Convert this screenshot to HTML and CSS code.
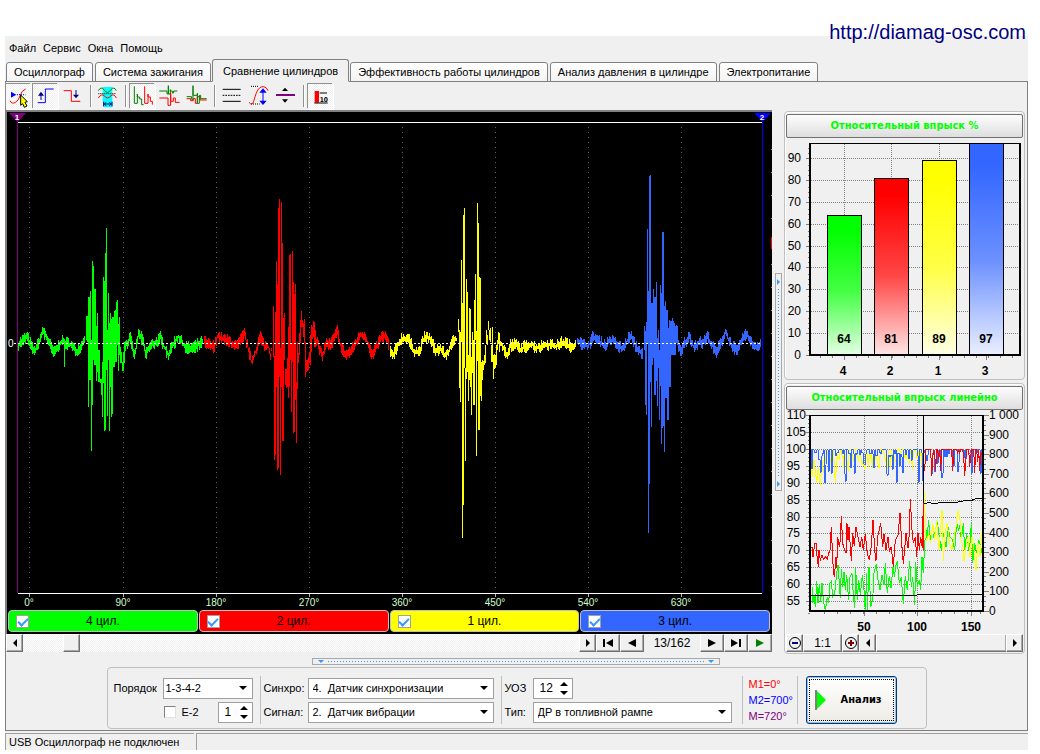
FILE: index.html
```html
<!DOCTYPE html>
<html lang="ru">
<head>
<meta charset="utf-8">
<title>Осциллограф</title>
<link rel="stylesheet" href="styles.css">
</head>
<body>
<header class="site"><a class="site-link" href="http://diamag-osc.com">http://diamag-osc.com</a></header>
<div class="app">
  <nav class="menu">
    <button type="button">Файл</button><button type="button">Сервис</button><button type="button">Окна</button><button type="button">Помощь</button>
  </nav>
  <div class="tabs" role="tablist">
    <button class="tab" role="tab">Осциллограф</button>
    <button class="tab" role="tab">Система зажигания</button>
    <button class="tab active" role="tab" aria-selected="true">Сравнение цилиндров</button>
    <button class="tab" role="tab">Эффективность работы цилиндров</button>
    <button class="tab" role="tab">Анализ давления в цилиндре</button>
    <button class="tab" role="tab">Электропитание</button>
  </div>
  <main class="page">
    <div class="toolbar">
      <button class="tool on" aria-label="Маркер"><svg viewBox="18 8 75 75"><path class="s blue" d="M51 40H76" stroke-dasharray="3 3"/><path class="blue-f" d="M33 31V49L49 40Z"/><path class="s red" d="M30 58Q36 70 46 63Q56 58 60 44Q64 28 77 23"/><path d="M62 41L82 61L75 63L81 74L73 78L68 67L62 72Z" fill="#ff0" stroke="#000" stroke-width="3"/></svg></button>
      <button class="tool on" aria-label="Фронт"><svg viewBox="100 8 75 75"><path class="s blue" d="M114 64H137V23H162"/><path class="s navy" d="M124 38V56"/><path class="navy-f" d="M115 43H133L124 31Z"/></svg></button>
      <button class="tool" aria-label="Спад"><svg viewBox="179 8 75 75"><path class="s red" d="M190 28H213V60H240"/><path class="s navy" d="M227 26V44"/><path class="navy-f" d="M218 40H236L227 51Z"/></svg></button>
      <i class="sep"></i>
      <button class="tool" aria-label="Период"><svg viewBox="284 8 75 75"><path d="M307 17H336V78H309V60H307Z" fill="#0ff"/><path class="s green" d="M294 28Q302 14 311 25Q321 42 332 25Q341 14 348 28"/><path class="s black" d="M294 37H348" stroke-dasharray="3 3"/><path class="s red" d="M294 50Q303 36 312 43Q321 57 332 43Q341 36 348 50"/><path class="s navy" d="M310 61V75M335 61V75M312 68H333M318 63L312 68L318 73M327 63L333 68L327 73"/></svg></button>
      <i class="sep"></i>
      <button class="tool on" aria-label="Последовательно"><svg viewBox="389 144 75 75"><path class="s green" d="M402 151V202M402 202H411V174V183H418V189H424V206H430"/><path class="s red" d="M433 151V202H443V174V183H450V196H456V206"/></svg></button>
      <button class="tool" aria-label="Друг под другом"><svg viewBox="470 144 75 75"><path class="s green" d="M477 165H500V174H504V149V174H510V161V165H516V171H520V165H531"/><path class="s red" d="M477 186H503V208H511V172V196H519V186H525V199H538"/></svg></button>
      <button class="tool" aria-label="Наложение"><svg viewBox="550 144 75 75"><path class="s red" d="M558 188H570V194H578V188H584V202H590V182H598V192H618"/><path class="s green" d="M558 182H573V190H577V149V178H590V172V202H596V178H600V188H618"/></svg></button>
      <i class="sep"></i>
      <button class="tool" aria-label="Уровни"><svg viewBox="655 144 75 75"><path class="s black" d="M666 160H720M666 196H720"/><path class="s black" d="M666 178H720" stroke-dasharray="5 3"/></svg></button>
      <button class="tool" aria-label="Масштаб"><svg viewBox="737 144 75 75"><path class="s black" d="M752 151H776M752 204H778" stroke-dasharray="3 3"/><path class="s red" d="M746 199Q756 211 760 196C766 176 772 150 790 152Q800 154 803 164"/><path class="s blue" d="M788 162V202"/><path class="blue-f" d="M777 170H799L788 157ZM777 194H799L788 207Z"/></svg></button>
      <button class="tool" aria-label="Центр"><svg viewBox="816 144 75 75"><path d="M825 174H882V180H825Z" fill="#800080"/><path d="M843 165H861L852 155ZM843 190H861L852 200Z"/></svg></button>
      <i class="sep"></i>
      <button class="tool on" aria-label="Гистограмма"><svg viewBox="922 144 75 75"><path d="M942 165H955V200H942Z" fill="red"/><path class="s black" d="M941 201H981M957 171H979"/><text x="957" y="197" class="ten">10</text></svg></button>
    </div>

    <div class="work">
      <section class="scope">
        <div class="screen">
          <svg class="wave" id="wave" viewBox="7 112 765 498"></svg>
          <div class="cyls">
            <label class="cyl c4"><input type="checkbox" checked><span>4 цил.</span></label>
            <label class="cyl c2"><input type="checkbox" checked><span>2 цил.</span></label>
            <label class="cyl c1"><input type="checkbox" checked><span>1 цил.</span></label>
            <label class="cyl c3"><input type="checkbox" checked><span>3 цил.</span></label>
          </div>
        </div>
        <div class="player">
          <button class="raised" aria-label="Влево"><svg viewBox="0 0 12 12"><path d="M8 2V10L4 6Z"/></svg></button>
          <input class="scroll" type="range" min="1" max="162" value="13" aria-label="Кадр">
          <button class="raised" aria-label="Вправо"><svg viewBox="0 0 12 12"><path d="M4 2V10L8 6Z"/></svg></button>
          <button class="raised wide" aria-label="В начало"><svg viewBox="0 0 12 12"><path d="M1 2H3V10H1ZM11 2V10L4 6Z"/></svg></button>
          <button class="raised wide" aria-label="Назад"><svg viewBox="0 0 12 12"><path d="M10 2V10L2 6Z"/></svg></button>
          <output class="frame">13/162</output>
          <button class="raised wide" aria-label="Вперёд"><svg viewBox="0 0 12 12"><path d="M2 2V10L10 6Z"/></svg></button>
          <button class="raised wide" aria-label="В конец"><svg viewBox="0 0 12 12"><path d="M9 2H11V10H9ZM1 2V10L8 6Z"/></svg></button>
          <button class="raised wide" aria-label="Пуск"><svg viewBox="0 0 12 12"><path d="M2 2V10L10 6Z" fill="green"/></svg></button>
        </div>
      </section>

      <div class="split-v"><i class="tri-r"></i><i class="dots-v"></i><i class="tri-r"></i></div>

      <aside class="side">
        <section class="group">
          <button class="title">Относительный впрыск %</button>
          <svg class="chart" id="bars" viewBox="786 138 237 240"></svg>
        </section>
        <section class="group">
          <button class="title">Относительный впрыск линейно</button>
          <svg class="chart" id="lines" viewBox="786 410 237 224"></svg>
          <div class="zoombar">
            <button class="raised" aria-label="Уменьшить"><svg viewBox="0 0 12 12"><circle cx="6" cy="6" r="5.5" fill="none" stroke="#000"/><path d="M3 5H9V7H3Z" fill="navy"/></svg></button>
            <button class="raised ratio">1:1</button>
            <button class="raised" aria-label="Увеличить"><svg viewBox="0 0 12 12"><circle cx="6" cy="6" r="5.5" fill="none" stroke="#000"/><path d="M3 5H5V3H7V5H9V7H7V9H5V7H3Z" fill="maroon"/></svg></button>
            <button class="raised" aria-label="Влево"><svg viewBox="0 0 12 12"><path d="M8 2V10L4 6Z"/></svg></button>
            <input class="scroll full" type="range" aria-label="Прокрутка">
            <button class="raised" aria-label="Вправо"><svg viewBox="0 0 12 12"><path d="M4 2V10L8 6Z"/></svg></button>
          </div>
        </section>
      </aside>
    </div>

    <div class="split-h"><i class="tri-d"></i><i class="dots-h"></i><i class="tri-d"></i></div>

    <form class="params">
      <div class="fields order">
        <label for="order">Порядок</label>
        <span class="select"><select id="order"><option>1-3-4-2</option></select></span>
        <span></span>
        <span class="pair">
          <label class="e2"><input class="sunken" type="checkbox">E-2</label>
          <span class="spin"><input type="text" value="1" aria-label="Номер"><span class="arrows"><button type="button" class="up" aria-label="Больше"></button><button type="button" class="down" aria-label="Меньше"></button></span></span>
        </span>
      </div>
      <i class="bar"></i>
      <div class="fields sensors">
        <label for="sync">Синхро:</label>
        <span class="select"><select id="sync"><option>4.&nbsp; Датчик синхронизации</option></select></span>
        <label for="signal">Сигнал:</label>
        <span class="select"><select id="signal"><option>2.&nbsp; Датчик вибрации</option></select></span>
      </div>
      <i class="bar"></i>
      <div class="fields kind">
        <label for="uoz">УОЗ</label>
        <span class="spin"><input id="uoz" type="text" value="12"><span class="arrows"><button type="button" class="up" aria-label="Больше"></button><button type="button" class="down" aria-label="Меньше"></button></span></span>
        <label for="type">Тип:</label>
        <span class="select"><select id="type"><option>ДР в топливной рампе</option></select></span>
      </div>
      <i class="bar last"></i>
      <div class="marks"><span class="m1">M1=0°</span><span class="m2">M2=700°</span><span class="m">M=720°</span></div>
      <i class="bar"></i>
      <button type="button" class="analyze"><svg viewBox="0 0 12 20"><path d="M1 0V20L11 10Z" fill="#0f0"/><path d="M1 0V20" stroke="#808080" stroke-width="2"/></svg><span>Анализ</span></button>
    </form>
  </main>
  <footer class="status"><span>USB Осциллограф не подключен</span><span></span></footer>
</div>
<script src="charts.js"></script>
</body>
</html>
```
FILE: styles.css
```css
* { box-sizing: border-box; }
body { margin: 0; background: #fff; color: #000; font: 11px/14px "Liberation Sans", Arial, sans-serif; }
button, input, select, output { font: inherit; color: inherit; margin: 0; }
button { padding: 0; border: 0; background: none; }
svg { display: block; }
i { display: block; }

.site { height: 36px; padding: 20px 14px 0 0; text-align: right; position: relative; z-index: 1; }
.site-link { font-size: 20px; line-height: 24px; color: #000080; text-decoration: none; }

.app { margin: 0 12px 0 5px; background: #f0f0f0; }
.menu { display: flex; gap: 7px; padding: 5px 4px 4px; }
.tabs { display: flex; align-items: flex-end; gap: 2px; padding: 0 1px; position: relative; z-index: 1; margin-bottom: -1px; }
.tab { height: 20px; padding: 0 7px; border: 1px solid #808080; border-radius: 3px 3px 0 0; background: linear-gradient(#fff, #f3f3f3); white-space: nowrap; }
.tab.active { height: 23px; padding: 0 10px; margin: 0 -1px; background: #f0f0f0; border-bottom-color: #f0f0f0; }
.page { border: 1px solid #808080; padding-bottom: 1px; }

.toolbar { display: flex; align-items: center; height: 28px; gap: 2px; }
.tool { width: 25px; height: 25px; }
.tool svg { width: 25px; height: 25px; }
.tool.on { box-shadow: -1px -1px #909090, 1px 1px #fff; background: repeating-conic-gradient(#fff 0 25%, #f0f0f0 0 50%) 0 0 / 2px 2px; }
.sep { width: 1px; height: 22px; margin: 0 2px 0 3px; background: #909090; box-shadow: 1px 0 #fff; }
.s { fill: none; stroke-width: 3; }
.red { stroke: red; } .blue { stroke: blue; } .navy { stroke: navy; } .green { stroke: green; } .black { stroke: #000; }
.blue-f { fill: blue; } .navy-f { fill: navy; }
.ten { font: bold 20px "DejaVu Sans Condensed", sans-serif; }

.work { display: grid; grid-template-columns: minmax(0, 1fr) 7px 241px; gap: 2px; align-items: start; padding-right: 2px; }
.screen { background: #000; border: 1px solid #808080; border-width: 2px 0 0 1px; margin-right: 1px; }
.wave { width: 100%; height: auto; }
.cyls { display: grid; grid-template-columns: repeat(4, 1fr); gap: 1px; padding: 0 2px 2px 1px; height: 24px; }
.cyl { display: grid; grid-template-columns: 24px 1fr 24px; align-items: center; border: 1px solid #c0c0c0; border-radius: 4px; }
.cyl span { text-align: center; font-size: 12px; }
.cyl input { appearance: none; width: 13px; height: 13px; margin-left: 7px; border: 1px solid #a0a0a0; background: #fff; display: grid; place-items: center; }
.cyl input:checked::after { content: ""; width: 4px; height: 8px; border: solid #3399ff; border-width: 0 2px 2px 0; transform: rotate(45deg); margin-bottom: 2px; }
.c4 { background: #0f0; } .c2 { background: red; } .c1 { background: #ff0; } .c3 { background: #36f; }

.player, .zoombar { display: flex; height: 18px; }
.player { margin-right: 1px; }
.raised { flex: none; width: 17px; height: 18px; display: grid; place-items: center; background: #f0f0f0; border: 1px solid; border-color: #fff #707070 #707070 #fff; box-shadow: inset -1px -1px #a8a8a8; }
.raised.wide { width: 24px; }
.raised svg { width: 12px; height: 12px; }
.frame { width: 56px; text-align: center; font-size: 12px; line-height: 18px; }
.scroll { flex: 1; min-width: 0; height: 18px; appearance: none; background: repeating-conic-gradient(#fff 0 25%, #f0f0f0 0 50%) 0 0 / 2px 2px; }
.scroll::-webkit-slider-thumb { appearance: none; width: 17px; height: 18px; background: #f0f0f0; border: 1px solid; border-color: #fff #707070 #707070 #fff; box-shadow: inset -1px -1px #a8a8a8; }
.scroll.full::-webkit-slider-thumb { width: 131px; }

.split-v { align-self: center; height: 218px; border: 1px solid #a8a8a8; display: flex; flex-direction: column; align-items: center; padding: 5px 0 3px; gap: 4px; }
.dots-v { flex: 1; width: 1px; background: repeating-linear-gradient(#39f 0 1px, transparent 1px 3px); }
.tri-r { border: solid transparent; border-width: 3px 0 3px 3px; border-left-color: #39f; }
.side { display: grid; gap: 3px; padding-top: 1px; }
.group { border: 1px solid #c0c0c0; border-radius: 4px; padding: 2px 1px 1px; box-shadow: inset 1px 1px #fff; }
.title { display: block; width: 100%; height: 24px; border: 1px solid #707070; border-radius: 2px; background: linear-gradient(#fdfdfd, #dedede); color: #0f0; font-family: "DejaVu Sans Condensed", sans-serif; font-weight: bold; }
.chart { width: 100%; height: auto; overflow: visible; font-size: 12px; }
.zoombar .ratio { width: 39px; font-size: 12px; }

.split-h { width: 40%; height: 7px; margin: 4px auto 2px 306px; border: 1px solid #a8a8a8; display: flex; align-items: center; padding: 0 5px; gap: 4px; }
.dots-h { flex: 1; height: 1px; background: repeating-linear-gradient(90deg, #39f 0 1px, transparent 1px 3px); }
.tri-d { border: solid transparent; border-width: 3px 3px 0; border-top-color: #39f; }

.params { width: fit-content; min-height: 62px; margin: 0 auto; padding: 8px 29px 4px 6px; display: flex; align-items: center; border: 1px solid #c0c0c0; border-radius: 4px; }
.fields { display: grid; align-items: center; row-gap: 3px; }
.order { grid-template-columns: 49px 90px; }
.sensors { grid-template-columns: 44px 186px; }
.kind { grid-template-columns: 28px 199px; }
.bar { width: 1px; height: 48px; margin: 0 3px 0 7px; background: #c0c0c0; }
.bar.last { margin: 0 6px 0 10px; }
.select { display: grid; align-items: center; }
.select > select { grid-area: 1 / 1; width: 100%; height: 21px; appearance: none; padding: 0 2px; border: 1px solid #a0a0a0; border-radius: 0; background: #fff; }
.sensors select, .kind select { padding-left: 4px; }
.select::after { content: ""; grid-area: 1 / 1; justify-self: end; margin-right: 6px; border: solid transparent; border-width: 4px 4px 0; border-top-color: #000; pointer-events: none; }
.pair { display: flex; justify-content: space-between; align-items: center; }
.e2 { display: flex; align-items: center; gap: 6px; }
.sunken { appearance: none; width: 12px; height: 12px; margin-left: 1px; background: #fff; border: 1px solid; border-color: #808080 #e0e0e0 #e0e0e0 #808080; }
.spin { display: flex; width: 35px; height: 21px; border: 1px solid #a0a0a0; background: #fff; font-size: 12px; }
.kind .spin { width: 40px; }
.spin input { flex: 1; min-width: 0; width: 0; border: 0; padding: 0 0 0 6px; background: none; }
.arrows { width: 16px; display: flex; flex-direction: column; align-items: center; justify-content: center; gap: 5px; }
.up, .down { border: solid transparent; }
.up { border-width: 0 4px 4px; border-bottom-color: #000; }
.down { border-width: 4px 4px 0; border-top-color: #000; }
.marks { display: grid; row-gap: 2px; width: 41px; white-space: nowrap; }
.m1 { color: red; } .m2 { color: blue; } .m { color: purple; }
.analyze { width: 91px; height: 48px; margin-left: 5px; display: flex; align-items: center; gap: 14px; padding-left: 8px; border: 1px solid #003c74; border-radius: 3px; background: linear-gradient(#fff, #ecebe5); box-shadow: inset 0 0 0 1px #9cc0ee; outline: 1px dotted #000; outline-offset: -4px; font-family: "DejaVu Sans Condensed", sans-serif; font-weight: bold; }
.analyze svg { width: 12px; height: 20px; }

.status { display: grid; grid-template-columns: 189px 1fr; gap: 2px; margin-top: 2px; }
.status span { height: 17px; padding: 1px 3px 0; border: solid #a0a0a0; border-width: 1px 0 0 1px; white-space: nowrap; }
```
FILE: charts.js
```js
// Small deterministic generator so that the noise floor is stable between loads.
let seed = 7;
function rnd() { seed = (seed * 16807) % 2147483647; return seed / 2147483647; }

function rect(x, y, w, h, fill) { return `<rect x="${x}" y="${y}" width="${w}" height="${h}" fill="${fill}"/>`; }
function text(x, y, s, anchor, extra) { return `<text x="${x}" y="${y}" text-anchor="${anchor}" ${extra || ''}>${s}</text>`; }
function line(d, stroke, extra) { return `<path d="${d}" fill="none" stroke="${stroke}" shape-rendering="crispEdges" ${extra || ''}/>`; }

// Each cylinder: quiet key points before the knock, [top, bottom] columns of the knock, quiet key points after it.
const cylinders = [
  { color: '#00ff00',
    before: '18,344 22,341 27,337 31,346 34,352 38,343 43,331 47,339 52,350 54,353 60,342 66,343 70,345 76,351 82,344 85,334',
    start: 86,
    burst: '316,340 316,342 297,407 297,380 291,380 340,451 261,405 266,360 289,365 289,365 326,381 313,372 350,382 350,382 379,383 379,395 362,417 277,383 281,431 253,430 228,370 330,416 293,360 323,431 313,387 319,417 317,414 317,367 311,367 310,362 302,362 300,345 324,371 317,355 347,363 352,363 362,371 352,371 342,363',
    after: '125,346 130,338 134,356 138,334 142,339 145,354 150,346 155,343 160,338 164,347 168,355 172,345 178,337 184,346 190,349 197,345 203,341' },
  { color: '#ff0000',
    before: '204,342 210,346 214,347 217,336 224,340 230,342 236,347 240,341 244,334 248,349 251,362 255,352 260,336 264,346 268,347 270,355 272,345',
    start: 273,
    burst: '306,357 356,460 312,455 261,387 284,470 208,468 199,377 348,475 202,387 243,441 318,441 313,360 369,385 369,388 358,387 327,398 255,387 254,360 343,412 251,362 282,433 294,432 284,400 382,443 342,389 353,363 333,355 320,343 311,327 320,327 323,337 319,343 342,377 360,372 360,371 357,370 352,363 335,365 325,352 327,339 321,337 322,347 330,347',
    after: '316,340 320,352 322,357 325,344 330,344 334,338 337,331 340,345 345,355 350,352 356,342 360,335 365,336 369,349 372,355 376,348 380,338 385,336 389,346' },
  { color: '#ffff00',
    before: '390,352 393,356 398,344 401,339 408,338 413,350 418,353 424,338 429,338 435,350 440,349 445,356 449,350 453,340 457,339',
    start: 458,
    burst: '319,332 330,388 332,402 260,342 303,538 215,505 208,368 368,461 279,379 292,372 355,401 308,380 309,387 357,415 332,373 340,405 300,405 274,340 331,456 203,361 223,430 277,430 278,396 362,401 360,380 361,370 355,365 345,363 330,344 335,345 321,330 330,340 328,342 345,362 327,362 355,379 354,369 355,368 345,365 340,350 332,343 333,352',
    after: '500,342 504,350 507,356 510,345 515,344 520,349 530,344 536,348 542,346 550,344 555,347 560,343 566,343 570,347 574,345 576,343' },
  { color: '#3366ff',
    before: '577,340 582,345 588,346 593,336 598,341 605,345 610,340 616,344 622,349 626,343 630,335 635,346 640,352 643,354',
    start: 644,
    burst: '326,350 331,405 322,415 229,343 291,533 176,484 175,382 303,427 303,365 289,358 297,395 297,395 282,381 338,406 330,368 350,420 285,386 293,444 232,428 232,426 306,452 301,398 310,398 310,420 328,420 320,387 321,387 321,355 318,355 321,355 323,355 326,355 325,343 326,345',
    after: '678,346 681,352 684,343 689,337 693,346 698,343 703,342 707,336 712,346 716,352 720,343 725,333 730,343 737,352 742,338 747,334 750,342 756,347 761,341' }
];

function parse(s) { return s.split(' ').map(p => p.split(',').map(Number)); }

function quiet(points) {
  const cols = [];
  for (let i = 0; i + 1 < points.length; i++) {
    const [x0, y0] = points[i], [x1, y1] = points[i + 1];
    for (let x = x0; x < x1; x++) {
      const y = y0 + (y1 - y0) * (x - x0) / (x1 - x0);
      cols.push([x, Math.round(y - 1 - rnd() * 6), Math.round(y + 1 + rnd() * 6)]);
    }
  }
  return cols;
}

function drawScope() {
  let s = '';
  for (const x of [29, 123, 216, 309, 402, 495, 588, 681]) {
    s += line(`M${x}.5 127V592`, '#606060', 'stroke-dasharray="1 4"');
    s += line(`M${x}.5 594V597`, '#b0b0b0');
  }
  for (let y = 149; y < 600; y += 23) s += rect(771, y, 1, 1, '#888');
  s += rect(771, 237, 1, 12, 'red');
  for (const c of cylinders) {
    const cols = quiet(parse(c.before))
      .concat(parse(c.burst).map((b, i) => [c.start + i, b[0], b[1]]))
      .concat(quiet(parse(c.after)));
    s += line(cols.map(([x, a, b]) => `M${x}.5 ${a}V${b}`).join(''), c.color);
  }
  s += line('M64.5 340V367', '#00ff00');
  s += line('M14 343.5H762', '#fff', 'stroke-dasharray="2 2"');
  s += line('M17.5 120V593', '#800080') + line('M762.5 118V593', '#0000ff');
  s += line('M18 122.5H762M18 593.5H762', '#fff');
  s += '<path d="M9 113H26L17.5 122Z" fill="#800080"/><path d="M754 113H771L762.5 122Z" fill="#0000ff"/>';
  const mark = 'fill="#fff" font-size="8" font-weight="bold"';
  s += text(17, 120, '1', 'middle', mark) + text(762, 120, '2', 'middle', mark);
  s += text(8, 347, '0', 'start', 'fill="#fff" font-size="10"');
  [[29, 0], [123, 90], [216, 180], [309, 270], [402, 360], [495, 450], [588, 540], [681, 630]].forEach(([x, v]) => {
    s += text(x, 606, v + '°', 'middle', 'fill="#d0ffd0" font-size="10"');
  });
  document.getElementById('wave').innerHTML = s;
}

function drawBars() {
  const data = [
    { cyl: 4, v: 64, x: 827, y: 215, c: '#00ff00', mid: '#46ff46', end: '#e6ffe6' },
    { cyl: 2, v: 81, x: 874, y: 178, c: '#ff0000', mid: '#ff4646', end: '#ffe6e6' },
    { cyl: 1, v: 89, x: 922, y: 160, c: '#ffff00', mid: '#ffff46', end: '#ffffe6' },
    { cyl: 3, v: 97, x: 969, y: 143, c: '#3366ff', mid: '#6b90ff', end: '#ebf0ff' }
  ];
  let s = '<defs>' + data.map(d => `<linearGradient id="g${d.cyl}" x1="0" y1="0" x2="0" y2="1"><stop offset=".1" stop-color="${d.c}"/><stop offset=".55" stop-color="${d.mid}"/><stop offset="1" stop-color="${d.end}"/></linearGradient>`).join('') + '</defs>';
  for (let i = 0; i <= 9; i++) {
    const y = Math.round(355 - i * 21.9);
    if (i) s += line(`M811 ${y}.5H1019`, '#808080', 'stroke-dasharray="1 1"');
    s += line(`M806 ${y}.5H810`, '#808080');
    s += text(801, y + 4, i * 10, 'end');
    for (let k = 1; k < 4 && y - k * 5 > 143; k++) s += line(`M808 ${y - k * 5}.5H810`, '#808080');
  }
  data.forEach(d => {
    s += line(`M${d.x + 17}.5 144V${d.y}`, '#808080', 'stroke-dasharray="1 1"');
    s += `<rect x="${d.x}.5" y="${d.y}.5" width="34" height="${355 - d.y}" fill="url(#g${d.cyl})" stroke="#000"/>`;
    s += text(d.x + 17, 343, d.v, 'middle', 'font-weight="bold"');
    s += text(d.x + 16, 375, d.cyl, 'middle', 'font-weight="bold"');
    s += line(`M${d.x + 17}.5 356V360`, '#808080');
  });
  for (let x = 820; x < 1019; x += 12) s += line(`M${x}.5 356V358`, '#808080');
  s += line('M809 143.5H1021', '#000') + line('M810 143V356M1020 143V356M809 355H1021', '#000', 'stroke-width="2"');
  document.getElementById('bars').innerHTML = s;
}

// Traces are sampled at a third of a pixel from the point (800, 440).
function trace(points, color) {
  return line('M' + points.map(([x, y]) => `${(800 + x / 3).toFixed(1)} ${(440 + y / 3).toFixed(1)}`).join('L'), color);
}
function dips(from, to, depth, rate) {
  const p = [];
  for (let x = from; x < to; x += 3) {
    const r = rnd();
    p.push([x, rnd() > rate ? 29 : 38 + r * r * depth]);
  }
  return p;
}
const red = '33,322 37,322 39,350 44,310 48,310 52,360 56,382 57,330 61,362 66,345 70,358 76,350 82,356 86,340 90,330 94,262 97,330 100,390 103,412 108,350 110,385 113,290 118,320 121,300 124,228 128,310 132,325 138,340 141,250 144,300 147,262 150,305 154,362 158,280 163,318 168,262 174,290 180,320 185,290 190,330 196,282 202,340 208,360 214,318 219,240 224,330 228,362 233,290 242,250 248,320 252,282 258,330 264,290 268,335 274,320 280,380 286,300 294,285 300,218 305,310 310,372 318,280 324,325 328,280 331,178 336,270 340,310 346,290 350,350 354,280 358,330 362,290 367,325 370,190 371,330';
const green = '36,440 38,490 42,465 46,500 50,424 54,490 58,432 62,485 66,430 70,480 76,512 82,470 86,490 90,430 94,424 98,470 104,460 110,400 114,375 118,430 121,475 124,388 128,440 132,395 136,450 140,405 146,480 150,410 156,400 160,465 164,505 167,385 172,480 176,420 181,465 187,405 192,450 196,510 200,400 202,512 207,380 212,500 218,480 222,400 229,372 234,420 240,450 246,405 252,435 256,370 262,460 268,408 273,445 279,380 283,410 288,375 292,362 298,430 304,412 310,492 316,408 322,450 329,362 334,440 338,412 344,495 347,365 352,440 358,420 362,450 366,350 370,400 374,310 378,270 380,300 386,240 390,300 394,280 398,262 402,295 406,270 412,245 418,290 424,330 430,280 438,320 444,260 450,290 458,300 464,330 470,250 476,270 480,255 484,300 490,250 494,330 500,280 508,340 514,250 518,370 524,310 530,340 536,300 542,320 548,350';
const yellowLeft = '33,80 37,110 42,60 47,100 50,130 55,80 61,138 66,60 70,100 76,60 82,28 88,80 94,50 100,28 106,128 112,40';
const yellowRight = '371,140 374,190 377,290 380,300 386,280 392,310 398,250 404,300 410,240 416,330 422,270 426,210 430,362 436,270 442,250 448,310 456,330 462,290 468,260 475,210 480,240 485,300 492,362 498,320 504,290 510,350 516,290 522,330 528,390 534,310 540,350 546,278';

function drawLines() {
  let s = '';
  for (let v = 110; v >= 55; v -= 5) {
    const y = Math.round(415 + (110 - v) * 3.385);
    if (v < 110) s += line(`M811 ${y}.5H982`, '#808080', 'stroke-dasharray="1 1"');
    s += line(`M806 ${y}.5H810`, '#808080');
    s += text(v > 99 ? 806 : 800, y + 4, v, 'end');
    for (let k = 1; k < 4; k++) s += line(`M808 ${y + k * 4}.5H810`, '#808080');
  }
  for (let i = 0; i <= 10; i++) {
    const y = Math.round(611 - i * 19.6);
    s += line(`M984 ${y}.5H989`, '#808080');
    s += text(989, y + 4, i === 10 ? '1 000' : i * 100, 'start');
    if (i < 10) for (let k = 1; k < 4; k++) s += line(`M984 ${y - k * 5}.5H986`, '#808080');
  }
  [[864, 50], [917, 100], [971, 150]].forEach(([x, v]) => {
    s += line(`M${x}.5 416V610`, '#808080', 'stroke-dasharray="1 1"') + line(`M${x}.5 612V616`, '#808080');
    s += text(x, 631, v, 'middle', 'font-weight="bold"');
  });
  for (let x = 824; x < 983; x += 13) s += line(`M${x}.5 612V614`, '#808080');
  s += trace(parse(green), '#00ff00');
  s += trace(parse(yellowLeft).concat(dips(115, 371, 60, .7), parse(yellowRight)), '#ffff00');
  s += trace(dips(33, 548, 95, .6), '#3366ff');
  s += trace(parse(red), '#ff0000') + trace(dips(374, 548, 75, .4), '#ff0000');
  s += line('M923.5 416V503', '#000') + trace(parse('373,190 390,188 402,191 420,188 440,187 470,187 485,184 500,180 515,181 525,177 548,176'), '#000');
  s += trace(parse('33,467 60,466 90,468 110,465 150,466 250,466 350,465 450,464 548,464'), '#000');
  s += line('M809 415.5H984', '#000') + line('M810 415V612M983 415V612M809 611H984', '#000', 'stroke-width="2"');
  document.getElementById('lines').innerHTML = s;
}

drawScope();
drawBars();
drawLines();
```
